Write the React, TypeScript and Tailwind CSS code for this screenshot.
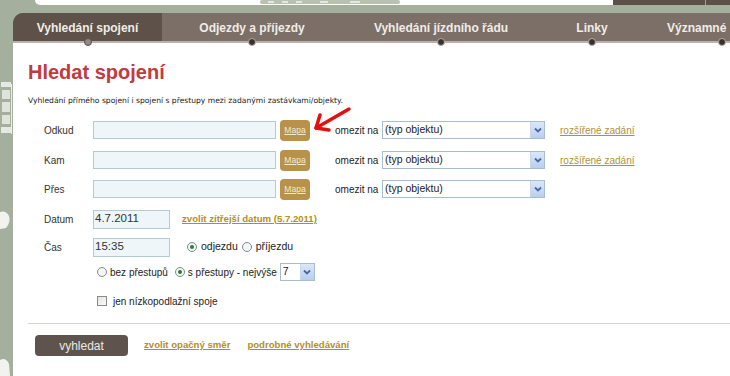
import React from "react";

function Radio({ checked }: { checked?: boolean }) {
  return (
    <span className="inline-flex w-[10px] h-[10px] rounded-full border border-[#7d8a96] bg-[#f4f6f4] items-center justify-center shrink-0">
      {checked && <span className="w-[4px] h-[4px] rounded-full bg-[#2f7a2f]" />}
    </span>
  );
}

function SelectBox({ w, text }: { w: string; text: string }) {
  return (
    <div className={`${w} h-[18px] flex border border-[#a9bdd0] bg-white`}>
      <div className="flex-1 flex items-center pl-[2px] text-[10.5px] text-[#222]">{text}</div>
      <div className="w-[14px] h-full bg-gradient-to-b from-[#dbe7f8] to-[#b9cff0] border-l border-[#c9d8ec] flex items-center justify-center">
        <svg width="8" height="6" viewBox="0 0 8 6">
          <path d="M1 1.5 L4 4.5 L7 1.5" stroke="#4a68a0" strokeWidth="1.8" fill="none" />
        </svg>
      </div>
    </div>
  );
}

function Mapa() {
  return (
    <div className="ml-[4px] w-[30px] h-[21px] rounded-[4px] bg-[#b8914a] flex items-center justify-center">
      <span className="text-[8.5px] text-[#f3ead6] underline">Mapa</span>
    </div>
  );
}

function PlaceRow({ label, link }: { label: string; link?: boolean }) {
  return (
    <div className="flex items-center h-[20px]">
      <div className="w-[49px] text-[10px] text-[#333]">{label}</div>
      <div className="w-[183px] h-[18px] border border-[#b4cad4] bg-[#eff6f9]" />
      <Mapa />
      <div className="ml-[25px] w-[47px] text-[10px] text-[#222]">omezit na</div>
      <SelectBox w="w-[163px]" text="(typ objektu)" />
      {link && (
        <span className="ml-[15px] text-[10px] text-[#ac9340] underline">rozšířené zadání</span>
      )}
    </div>
  );
}

export default function App() {
  const tabs = [
    { t: "Vyhledání spojení", w: "w-[149px]", active: true },
    { t: "Odjezdy a příjezdy", w: "w-[180px]" },
    { t: "Vyhledání jízdního řádu", w: "w-[198px]" },
    { t: "Linky", w: "w-[104px]" },
  ];
  return (
    <div className="relative w-[730px] h-[376px] overflow-hidden bg-[#a5af9d] font-['Liberation_Sans',Arial,sans-serif]">
      {/* left decorative strip */}
      <svg className="absolute left-0 top-0" width="13" height="376" viewBox="0 0 13 376">
        <rect x="1" y="82" width="10" height="5" fill="#e6e9e2" />
        <rect x="2" y="90" width="8" height="9" fill="#dfe3da" />
        <rect x="2" y="102" width="8" height="10" fill="#dfe3da" />
        <rect x="2" y="115" width="8" height="9" fill="#dfe3da" />
        <rect x="1" y="127" width="10" height="6" fill="#e6e9e2" />
        <rect x="11" y="84" width="1" height="50" fill="#eef0ea" />
        <path d="M0 212 Q6 210 9 216 Q11 222 6 228 L0 229 Z" fill="#f2f3ef" />
        <path d="M0 360 Q6 357 9 364 L10 376 L0 376 Z" fill="#f2f3ef" />
      </svg>

      {/* top strip */}
      <div className="flex h-[5px]">
        <div className="w-[35px]" />
        <div className="w-[578px] bg-white rounded-bl-[6px] relative">
          <svg className="absolute left-[225px] top-0" width="140" height="5" viewBox="0 0 140 5">
            <rect x="0" y="0" width="140" height="4" rx="2" fill="#b9c1b1" />
            <rect x="8" y="1" width="6" height="2" fill="#e4e8e0" />
            <rect x="22" y="1" width="6" height="2" fill="#e4e8e0" />
            <rect x="36" y="1" width="6" height="2" fill="#e4e8e0" />
            <rect x="60" y="1" width="8" height="2" fill="#e4e8e0" />
            <rect x="90" y="1" width="10" height="2" fill="#e4e8e0" />
          </svg>
        </div>
        <div className="flex-1 bg-[#5c5048] flex">
          <div className="w-[92px]" />
          <div className="w-px bg-[#a89e96]" />
        </div>
      </div>
      <div className="h-[8px]" />

      <div className="flex">
        <div className="w-[13px] shrink-0" />
        <div className="flex-1 flex flex-col">
          {/* tab bar */}
          <div className="relative flex h-[28px] bg-[#7b6f68] rounded-tl-[10px]">
            {tabs.map((tab) => (
              <div
                key={tab.t}
                className={`relative ${tab.w} shrink-0 flex items-center justify-center text-[12px] font-bold text-[#f1ece6] ${
                  tab.active ? "bg-[#5d5149] rounded-tl-[10px]" : ""
                }`}
              >
                <span className="pt-[1px]">{tab.t}</span>
                <span
                  className={`absolute z-10 left-1/2 -translate-x-1/2 bottom-[-5px] w-[8px] h-[8px] rounded-full border ${
                    tab.active ? "bg-[#8f8983] border-[#5d5149]" : "bg-[#3b322d] border-[#b7afa8]"
                  }`}
                />
              </div>
            ))}
            <div className="relative w-[200px] shrink-0 flex items-center pl-[23px] text-[12px] font-bold text-[#f1ece6] whitespace-nowrap">
              <span className="pt-[1px]">Významné</span>
              <span className="absolute z-10 left-[74px] bottom-[-5px] w-[8px] h-[8px] rounded-full border bg-[#3b322d] border-[#b7afa8]" />
            </div>
          </div>
          <div className="h-[2px] bg-[#bbb3ab]" />

          {/* content */}
          <div className="h-[333px] bg-white pl-[15px]">
            <h1 className="mt-[19px] h-[20px] leading-[20px] text-[20px] font-bold text-[#c23a3d]">
              Hledat spojení
            </h1>
            <p className="mt-[14px] h-[10px] leading-[10px] text-[7.6px] text-[#222] font-['DejaVu_Sans',Verdana,sans-serif] whitespace-nowrap">
              Vyhledání přímého spojení i spojení s přestupy mezi zadanými zastávkami/objekty.
            </p>

            <div className="pl-[16px]">
              <div className="mt-[14px]">
                <PlaceRow label="Odkud" link />
              </div>
              <div className="mt-[10px]">
                <PlaceRow label="Kam" link />
              </div>
              <div className="mt-[9px]">
                <PlaceRow label="Přes" />
              </div>

              <div className="mt-[10px] flex items-center h-[20px]">
                <div className="w-[49px] text-[10px] text-[#333]">Datum</div>
                <div className="w-[77px] h-[19px] border border-[#b4cad4] bg-[#eff6f9] flex items-center pl-[1px] text-[11.5px] text-[#333]">
                  4.7.2011
                </div>
                <span className="ml-[12px] text-[9.6px] font-bold text-[#b0901e] underline">
                  zvolit zítřejší datum (5.7.2011)
                </span>
              </div>

              <div className="mt-[8px] flex items-center h-[20px]">
                <div className="w-[49px] text-[10px] text-[#333]">Čas</div>
                <div className="w-[77px] h-[19px] border border-[#b4cad4] bg-[#eff6f9] flex items-center pl-[1px] text-[11.5px] text-[#333]">
                  15:35
                </div>
                <div className="ml-[17px] flex items-center gap-[4px] text-[10.5px] text-[#222]">
                  <Radio checked />
                  <span>odjezdu</span>
                  <Radio />
                  <span>příjezdu</span>
                </div>
              </div>

              <div className="mt-[5px] flex items-center h-[20px] pl-[53px] gap-[3px] text-[10px] text-[#222]">
                <Radio />
                <span>bez přestupů</span>
                <span className="w-[1px]" />
                <Radio checked />
                <span>s přestupy - nejvýše</span>
                <SelectBox w="w-[35px]" text="7" />
              </div>

              <div className="mt-[9px] flex items-center h-[20px] pl-[53px] gap-[6px] text-[10px] text-[#222]">
                <span className="w-[10px] h-[10px] border border-[#8a8a8a] bg-gradient-to-br from-[#e4e4e0] to-[#fafafa]" />
                <span>jen nízkopodlažní spoje</span>
              </div>
            </div>

            <div className="mt-[12px] h-px bg-[#d3d3d3]" />

            <div className="mt-[11px] pl-[7px] flex items-center">
              <div className="w-[93px] h-[21px] rounded-[4px] bg-[#5f544d] flex items-center justify-center text-[12px] text-[#ece8e4]">
                vyhledat
              </div>
              <span className="ml-[16px] text-[9.6px] font-bold text-[#b0901e] underline">
                zvolit opačný směr
              </span>
              <span className="ml-[17px] text-[9.6px] font-bold text-[#b0901e] underline">
                podrobné vyhledávání
              </span>
            </div>
          </div>
        </div>
      </div>

      {/* red annotation arrow */}
      <svg className="absolute left-[310px] top-[104px]" width="44" height="32" viewBox="0 0 44 32">
        <path d="M39 5 L6 24" stroke="#e3100f" strokeWidth="3.5" strokeLinecap="round" fill="none" />
        <path d="M10 11 L6 24 L19 26" stroke="#e3100f" strokeWidth="3.5" strokeLinecap="round" strokeLinejoin="round" fill="none" />
      </svg>
    </div>
  );
}
